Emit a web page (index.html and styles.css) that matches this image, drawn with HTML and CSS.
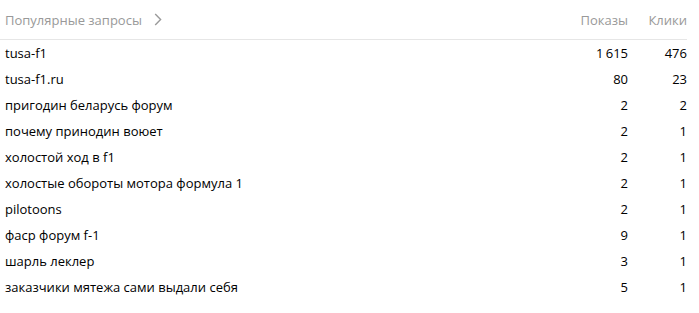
FILE: index.html
```html
<!DOCTYPE html>
<html lang="ru">
<head>
<meta charset="utf-8">
<link rel="stylesheet" href="styles.css">
</head>
<body>
<div class="widget">
  <div class="head">
    <div class="title">Популярные запросы
      <svg class="chev" width="8" height="13" viewBox="0 0 8 13"><path d="M1.2 1 L6.6 6.5 L1.2 12" fill="none" stroke="#9a9a9a" stroke-width="1.4"/></svg>
    </div>
    <div class="col">Показы</div>
    <div class="col clicks">Клики</div>
  </div>
  <div class="row"><div class="q">tusa-f1</div><div class="col">1&#8201;615</div><div class="col clicks">476</div></div>
  <div class="row"><div class="q">tusa-f1.ru</div><div class="col">80</div><div class="col clicks">23</div></div>
  <div class="row"><div class="q">пригодин беларусь форум</div><div class="col">2</div><div class="col clicks">2</div></div>
  <div class="row"><div class="q">почему принодин воюет</div><div class="col">2</div><div class="col clicks">1</div></div>
  <div class="row"><div class="q">холостой ход в f1</div><div class="col">2</div><div class="col clicks">1</div></div>
  <div class="row"><div class="q">холостые обороты мотора формула 1</div><div class="col">2</div><div class="col clicks">1</div></div>
  <div class="row"><div class="q">pilotoons</div><div class="col">2</div><div class="col clicks">1</div></div>
  <div class="row"><div class="q">фаср форум f-1</div><div class="col">9</div><div class="col clicks">1</div></div>
  <div class="row"><div class="q">шарль леклер</div><div class="col">3</div><div class="col clicks">1</div></div>
  <div class="row"><div class="q">заказчики мятежа сами выдали себя</div><div class="col">5</div><div class="col clicks">1</div></div>
</div>
</body>
</html>
```
FILE: styles.css
```css
html, body { margin: 0; background: #fff; }
body { font-family: "Open Sans", "Noto Sans", sans-serif; font-size: 13px; color: #000; }
.widget { width: 687px; }
.head {
  display: grid; grid-template-columns: 1fr 80px 59px;
  align-items: center; height: 40px; padding-left: 5px;
  border-bottom: 1px solid #e6e6e6; color: #999; box-sizing: border-box;
}
.title { display: flex; align-items: center; gap: 12px; }
.chev { margin-top: 0; }
.row {
  display: grid; grid-template-columns: 1fr 80px 59px;
  align-items: center; height: 26px; padding-left: 5px;
}
.col { text-align: right; }
```
